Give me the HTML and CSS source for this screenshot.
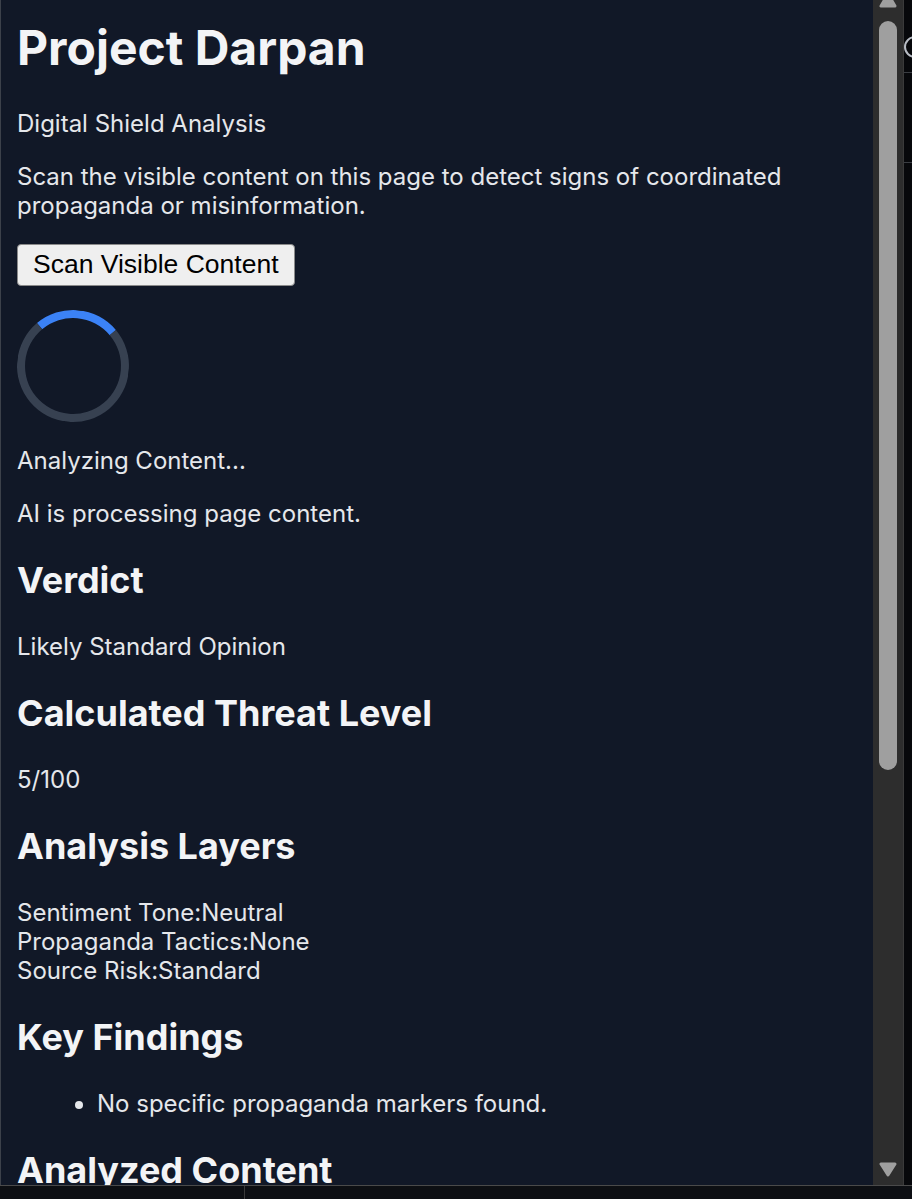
FILE: index.html
```html
<!DOCTYPE html>
<html lang="en">
<head>
<meta charset="UTF-8">
<meta name="viewport" content="width=device-width, initial-scale=1.0">
<title>Project Darpan</title>
<link rel="stylesheet" href="styles.css">
</head>
<body>
    <div class="window">
        <div class="panel">
            <main class="content">
                <h1>Project Darpan</h1>
                <p>Digital Shield Analysis</p>
                <p>Scan the visible content on this page to detect signs of coordinated propaganda or misinformation.</p>
                <p><button type="button" class="scan-btn">Scan Visible Content</button></p>

                <div class="spinner"></div>
                <p>Analyzing Content...</p>
                <p>AI is processing page content.</p>

                <h2>Verdict</h2>
                <p>Likely Standard Opinion</p>

                <h2>Calculated Threat Level</h2>
                <p>5/100</p>

                <h2>Analysis Layers</h2>
                <div class="layers">
                    <div>Sentiment Tone:<span>Neutral</span></div>
                    <div>Propaganda Tactics:<span>None</span></div>
                    <div>Source Risk:<span>Standard</span></div>
                </div>

                <h2>Key Findings</h2>
                <ul class="findings">
                    <li>No specific propaganda markers found.</li>
                </ul>

                <h2>Analyzed Content</h2>
            </main>
            <div class="scrollbar">
                <svg class="arrow up" width="18" height="16" viewBox="0 0 18 16"><polygon points="2,14 16,14 9,2" fill="#9f9f9f" stroke="#9f9f9f" stroke-width="3" stroke-linejoin="round"/></svg>
                <div class="thumb"></div>
                <svg class="arrow down" width="18" height="15" viewBox="0 0 18 15"><polygon points="2,2 16,2 9,13" fill="#9f9f9f" stroke="#9f9f9f" stroke-width="3" stroke-linejoin="round"/></svg>
            </div>
        </div>
        <div class="edge">
            <div class="edge-ring"></div>
            <div class="edge-line first"></div>
            <div class="edge-line second"></div>
        </div>
    </div>
    <div class="statusbar">
        <div class="status-cell"></div>
    </div>
</body>
</html>
```

FILE: styles.css
```css
:root{
    --bg:#111827;
    --text:#e5e7eb;
    --track:#2d2d2d;
    --thumb:#9f9f9f;
}
body{
    margin:0;
    background:#0d0f13;
    font-family:Inter,"Noto Sans",sans-serif;
    overflow:hidden;
}
.window{
    display:flex;
    height:1185px;
    border-bottom:1px solid #4a4a4a;
}
.panel{
    flex:1;
    display:flex;
    background:var(--bg);
    border-left:1px solid #3c414a;
    overflow:hidden;
}
.content{
    flex:1;
    padding:0 16px;
    color:var(--text);
    font-size:24px;
}
h1{
    font-size:48px;
    font-weight:700;
    margin:18px 0 32px;
    color:#f3f4f6;
}
h2{
    font-size:36px;
    font-weight:700;
    margin:30px 0;
    color:#f3f4f6;
}
p{
    margin:24px 0;
}
.scan-btn{
    font-family:"Liberation Sans",Arial,sans-serif;
    font-size:26.5px;
    padding:5px 15px 6px;
    background:#efefef;
    color:#000;
    border:1.5px solid #8a8a8a;
    border-radius:4px;
    vertical-align:top;
    line-height:29px;
}
.spinner{
    width:96px;
    height:96px;
    border:8px solid #374151;
    border-top-color:#3b82f6;
    border-radius:50%;
    transform:rotate(5deg);
}
.layers{
    margin:24px 0;
}
.findings{
    margin:24px 0;
    padding-left:80px;
}
.scrollbar{
    width:30px;
    flex-shrink:0;
    background:var(--track);
    position:relative;
}
.arrow{
    position:absolute;
    left:6px;
}
.arrow.up{top:-8px;}
.arrow.down{top:1162px;}
.thumb{
    position:absolute;
    left:6px;
    top:21px;
    width:18px;
    height:749px;
    background:var(--thumb);
    border-radius:9px;
}
.edge{
    width:8px;
    flex-shrink:0;
    background:#07080b;
    border-left:1px solid #3a3a3a;
    position:relative;
    overflow:hidden;
}
.edge-ring{
    position:absolute;
    left:0;
    top:36px;
    width:18px;
    height:18px;
    border:2.5px solid #b8bcc4;
    border-radius:50%;
}
.edge-line{
    position:absolute;
    left:0;
    right:0;
    height:1px;
    background:#3a3d42;
}
.edge-line.first{top:72px;}
.edge-line.second{top:162px;}
.statusbar{
    height:13px;
    background:#0d0f13;
}
.status-cell{
    width:244px;
    height:100%;
    border-right:1px solid #3a3a3a;
}
```
